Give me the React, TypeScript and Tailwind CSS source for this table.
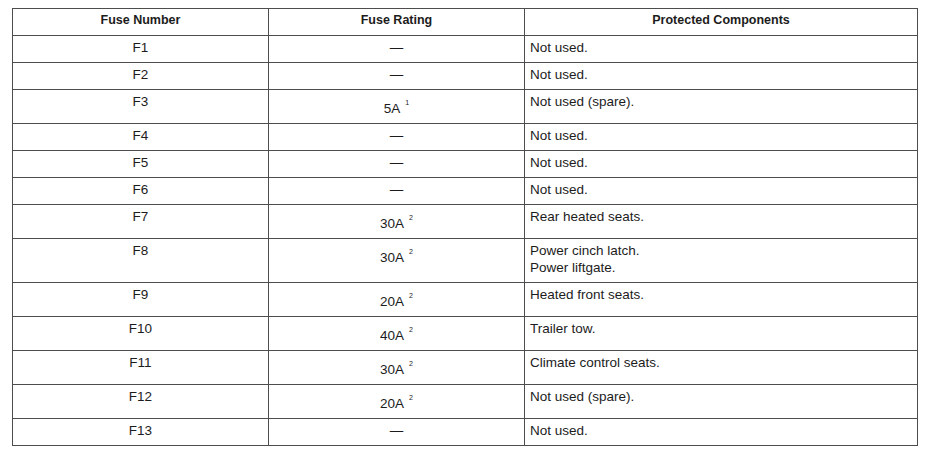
import React from "react";

type Row = { n: string; r: string; sup?: string; c: string[] };

const rows: Row[] = [
  { n: "F1", r: "—", c: ["Not used."] },
  { n: "F2", r: "—", c: ["Not used."] },
  { n: "F3", r: "5A", sup: "1", c: ["Not used (spare)."] },
  { n: "F4", r: "—", c: ["Not used."] },
  { n: "F5", r: "—", c: ["Not used."] },
  { n: "F6", r: "—", c: ["Not used."] },
  { n: "F7", r: "30A", sup: "2", c: ["Rear heated seats."] },
  { n: "F8", r: "30A", sup: "2", c: ["Power cinch latch.", "Power liftgate."] },
  { n: "F9", r: "20A", sup: "2", c: ["Heated front seats."] },
  { n: "F10", r: "40A", sup: "2", c: ["Trailer tow."] },
  { n: "F11", r: "30A", sup: "2", c: ["Climate control seats."] },
  { n: "F12", r: "20A", sup: "2", c: ["Not used (spare)."] },
  { n: "F13", r: "—", c: ["Not used."] },
];

const cell = "border border-[#4d4d4d] pt-[3px] pb-0 align-top text-[13.5px] leading-[17px]";

export default function App() {
  return (
    <div
      className="w-[927px] h-[460px] bg-white pt-[8px] pl-[12px]"
      style={{ fontFamily: '"Liberation Sans", Arial, sans-serif' }}
    >
      <table className="border-collapse table-fixed w-[905px] text-[#1c1c1c]">
        <colgroup>
          <col className="w-[256px]" />
          <col className="w-[256px]" />
          <col className="w-[393px]" />
        </colgroup>
        <thead>
          <tr className="h-[27px]">
            {["Fuse Number", "Fuse Rating", "Protected Components"].map((h) => (
              <th
                key={h}
                className="border border-[#4d4d4d] pt-[3px] pb-0 text-center align-top text-[12.5px] leading-[17px] font-bold"
              >
                {h}
              </th>
            ))}
          </tr>
        </thead>
        <tbody>
          {rows.map((row) => (
            <tr
              key={row.n}
              className={row.c.length > 1 ? "h-[44px]" : row.sup ? "h-[34px]" : "h-[27px]"}
            >
              <td className={cell + " text-center"}>{row.n}</td>
              <td className={cell + " text-center"}>
                {row.sup ? (
                  <div className="pt-[7px]">
                    {row.r}
                    <span className="inline-block align-top text-[7px] leading-none ml-[5px] mt-[-1px]">
                      {row.sup}
                    </span>
                  </div>
                ) : (
                  row.r
                )}
              </td>
              <td className={cell + " pl-[5px] text-left"}>
                {row.c.map((l) => (
                  <div key={l}>{l}</div>
                ))}
              </td>
            </tr>
          ))}
        </tbody>
      </table>
    </div>
  );
}
